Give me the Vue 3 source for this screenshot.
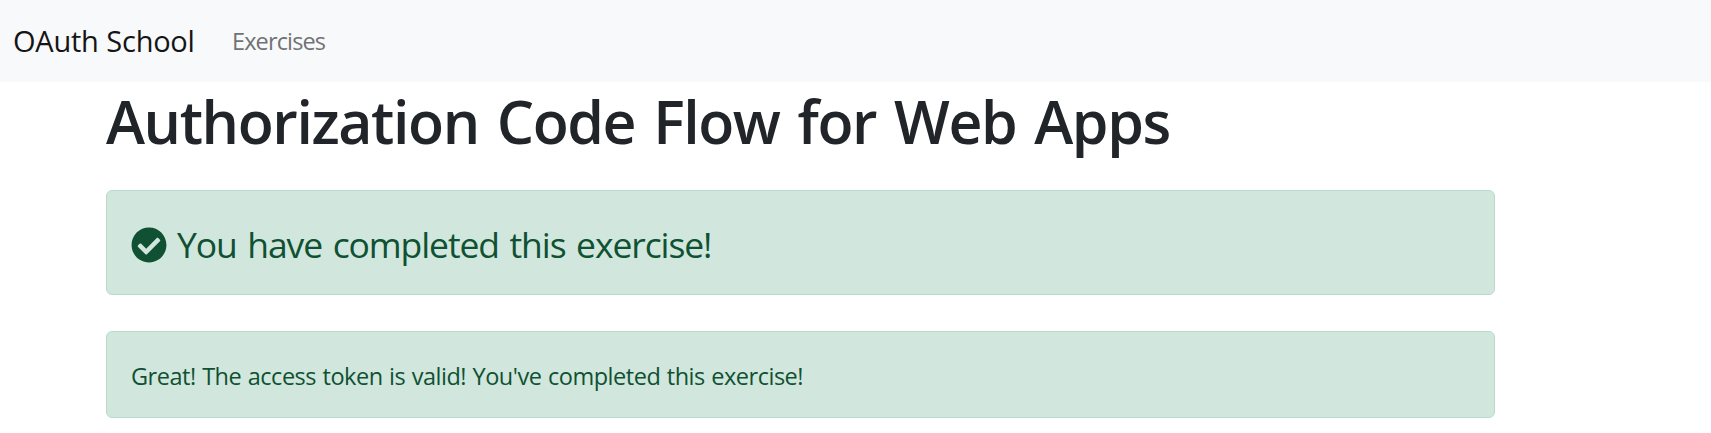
<script setup>
const title = 'Authorization Code Flow for Web Apps'
</script>

<template>
  <div class="page">
    <nav class="navbar">
      <a class="brand">OAuth School</a>
      <a class="nav-link">Exercises</a>
    </nav>
    <main class="container">
      <h1 class="title"><span>{{ title }}</span></h1>
      <div class="alert alert-large">
        <svg class="check" viewBox="0 0 512 512" aria-hidden="true">
          <path
            fill="currentColor"
            d="M504 256c0 136.967-111.033 248-248 248S8 392.967 8 256 119.033 8 256 8s248 111.033 248 248zM227.314 387.314l184-184c6.248-6.248 6.248-16.379 0-22.627l-22.627-22.627c-6.248-6.249-16.379-6.249-22.628 0L216 308.118l-70.059-70.059c-6.248-6.248-16.379-6.248-22.628 0l-22.627 22.627c-6.248 6.248-6.248 16.379 0 22.627l104 104c6.249 6.249 16.379 6.249 22.628.001z"
          />
        </svg>
        <span class="headline">You have completed this exercise!</span>
      </div>
      <div class="alert alert-small">
        <span class="message">Great! The access token is valid! You've completed this exercise!</span>
      </div>
    </main>
  </div>
</template>

<style>
body {
  margin: 0;
  background: #fff;
}
</style>

<style scoped>
.page {
  height: 433px;
  overflow: hidden;
  font-family: "Open Sans", "Noto Sans", sans-serif;
  color: #212529;
  white-space: nowrap;
}
.navbar {
  box-sizing: border-box;
  height: 82px;
  padding-left: 13px;
  display: flex;
  align-items: center;
  background: #f8f9fb;
}
.brand {
  width: 219px;
  font-size: 29px;
  font-weight: 400;
  line-height: 44px;
  letter-spacing: -0.25px;
  word-spacing: 0.5px;
  color: #151515;
}
.nav-link {
  font-size: 23.5px;
  font-weight: 400;
  line-height: 36px;
  letter-spacing: -0.87px;
  color: #707274;
}
.container {
  width: 1389px;
  margin-left: 106px;
}
.title {
  margin: 0 0 33px;
  padding-top: 3px;
  font-size: 59px;
  font-weight: 600;
  line-height: 72px;
  letter-spacing: -1.4px;
  word-spacing: 4px;
}
.alert {
  box-sizing: border-box;
  display: flex;
  align-items: center;
  padding: 0 24px;
  border: 1px solid #badbcc;
  border-radius: 6px;
  background: #d1e7dd;
  color: #0f5132;
}
.alert-large {
  height: 105px;
  margin-bottom: 36px;
}
.alert-small {
  height: 87px;
}
.check {
  width: 36px;
  height: 36px;
  margin-top: 4px;
  flex: none;
}
.headline {
  margin: 3px 0 0 10px;
  font-size: 35.5px;
  font-weight: 400;
  line-height: 44px;
  letter-spacing: -1.1px;
  word-spacing: 2.5px;
}
.message {
  margin-top: 3px;
  font-size: 23.5px;
  font-weight: 400;
  line-height: 36px;
  letter-spacing: -0.47px;
  word-spacing: 0.8px;
}
</style>
